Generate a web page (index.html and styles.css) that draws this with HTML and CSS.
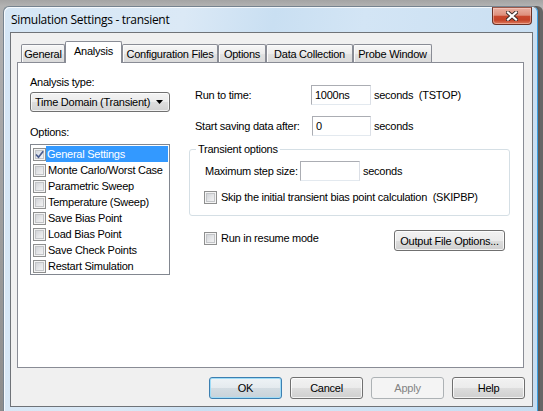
FILE: index.html
```html
<!DOCTYPE html>
<html>
<head>
<meta charset="utf-8">
<title>Simulation Settings - transient</title>
<link rel="stylesheet" href="styles.css">
</head>
<body>
<div class="window">
  <div class="titlebar">
    <span class="title">Simulation Settings - transient</span>
    <span class="close">
      <svg width="12" height="10" viewBox="0 0 12 10"><path d="M2 1.5L10 8.5M10 1.5L2 8.5" stroke="#3a2a28" stroke-width="4" stroke-linecap="square"/><path d="M2 1.5L10 8.5M10 1.5L2 8.5" stroke="#ffffff" stroke-width="2.2" stroke-linecap="square"/></svg>
    </span>
  </div>
  <div class="client">
    <div class="tabs">
      <div class="tab t-general">General</div>
      <div class="tab sel t-analysis">Analysis</div>
      <div class="tab t-config">Configuration Files</div>
      <div class="tab t-options">Options</div>
      <div class="tab t-data">Data Collection</div>
      <div class="tab t-probe">Probe Window</div>
    </div>
    <div class="panel">
      <div class="leftcol">
        <div class="lbl lbl-type">Analysis type:</div>
        <div class="combo"><span class="combo-text">Time Domain (Transient)</span><svg class="arrow" width="7" height="4" viewBox="0 0 7 4"><path d="M0 0H7L3.5 4Z" fill="#000"/></svg></div>
        <div class="lbl lbl-opts">Options:</div>
        <div class="list">
          <div class="item"><span class="cb checked"><svg width="11" height="11" viewBox="0 0 11 11"><path d="M2 5.5L4.5 8.2L9.2 2.2" fill="none" stroke="#4b5d8f" stroke-width="1.7"/></svg></span><span class="itext hl">General Settings</span></div>
          <div class="item"><span class="cb"></span><span class="itext">Monte Carlo/Worst Case</span></div>
          <div class="item"><span class="cb"></span><span class="itext">Parametric Sweep</span></div>
          <div class="item"><span class="cb"></span><span class="itext">Temperature (Sweep)</span></div>
          <div class="item"><span class="cb"></span><span class="itext">Save Bias Point</span></div>
          <div class="item"><span class="cb"></span><span class="itext">Load Bias Point</span></div>
          <div class="item"><span class="cb"></span><span class="itext">Save Check Points</span></div>
          <div class="item"><span class="cb"></span><span class="itext">Restart Simulation</span></div>
        </div>
      </div>
      <div class="rightcol">
        <div class="row row1"><span class="rl w1">Run to time:</span><span class="edit e1">1000ns</span><span class="unit">seconds&nbsp; (TSTOP)</span></div>
        <div class="row row2"><span class="rl w2">Start saving data after:</span><span class="edit e2">0</span><span class="unit">seconds</span></div>
        <fieldset class="group">
          <legend>Transient options</legend>
          <div class="row row3"><span class="rl w3">Maximum step size:</span><span class="edit e3"></span><span class="unit">seconds</span></div>
          <div class="chk row4"><span class="cb"></span><span class="ctext">Skip the initial transient bias point calculation&nbsp; (SKIPBP)</span></div>
        </fieldset>
        <div class="row5">
          <div class="chk resume"><span class="cb"></span><span class="ctext">Run in resume mode</span></div>
          <div class="btn outbtn">Output File Options...</div>
        </div>
      </div>
    </div>
    <div class="buttons">
      <div class="btn dlg default">OK</div>
      <div class="btn dlg">Cancel</div>
      <div class="btn dlg disabled">Apply</div>
      <div class="btn dlg">Help</div>
    </div>
  </div>
</div>
</body>
</html>
```
FILE: styles.css
```css
html, body {
  margin: 0;
  padding: 0;
}
body {
  width: 543px;
  height: 411px;
  overflow: hidden;
  background: linear-gradient(to bottom, #a4a4a4 0, #b2b2b2 6px, #8c8c8c 100%);
  font-family: "Liberation Sans", Arial, sans-serif;
  font-size: 11px;
  letter-spacing: -0.25px;
  color: #000;
}
.window {
  margin: 6px 0 0 3px;
  width: 535px;
  height: 405px;
  box-sizing: border-box;
  border: 1px solid #76838f;
  border-right-color: #3c9fe2;
  border-bottom: none;
  border-radius: 6px 6px 0 0;
  background: linear-gradient(100deg, #d5e6f5 0%, #dbe9f6 30%, #c9dff2 45%, #d3e5f5 60%, #c6ddf1 100%);
  box-shadow: inset 1px 1px 0 rgba(255,255,255,0.75), 2px 0 0 #5c5c5c, 5px 0 0 #666;
  padding: 0 4px 0 6px;
}
.titlebar {
  height: 25px;
  display: flex;
  align-items: flex-start;
}
.title {
  font-family: "Open Sans", "Noto Sans", sans-serif;
  font-size: 12px;
  letter-spacing: -0.3px;
  line-height: 16px;
  margin-top: 5px;
  padding-left: 1px;
  color: #000;
}
.close {
  margin-left: auto;
  margin-right: 1px;
  width: 40px;
  height: 18px;
  box-sizing: border-box;
  border: 1px solid #6b3226;
  border-top-color: #9a5a4c;
  border-radius: 0 0 4px 4px;
  background: linear-gradient(to bottom, #eab0a2 0%, #de8f7c 45%, #c9482e 52%, #c44328 75%, #dd7a5c 100%);
  box-shadow: inset 0 0 0 1px rgba(255,220,210,0.45);
  display: flex;
  align-items: center;
  justify-content: center;
}
.close svg { display: block; }
.client {
  width: 523px;
  height: 375px;
  box-sizing: border-box;
  border: 1px solid #6f7378;
  background: #f0f0f0;
  padding: 8px 8px 0 6px;
}
.tabs {
  display: flex;
  align-items: flex-end;
  height: 21px;
  margin-left: 4px;
}
.tab {
  height: 18px;
  box-sizing: border-box;
  border: 1px solid #898c95;
  border-bottom: none;
  border-radius: 2px 2px 0 0;
  background: linear-gradient(to bottom, #f7f7f7 0%, #ececec 50%, #e2e2e2 51%, #dadada 100%);
  box-shadow: inset 1px 1px 0 #fbfbfb;
  display: flex;
  align-items: center;
  justify-content: center;
  white-space: nowrap;
}
.tab.sel {
  height: 22px;
  margin-bottom: -1px;
  background: #ffffff;
  box-shadow: none;
  position: relative;
  z-index: 1;
  padding-bottom: 3px;
}
.t-general { width: 44px; }
.t-analysis { width: 57px; }
.t-config { width: 96px; }
.t-options { width: 48px; }
.t-data { width: 87px; }
.t-probe { width: 79px; }
.panel {
  height: 306px;
  box-sizing: border-box;
  border: 1px solid #898c95;
  background: #ffffff;
  display: flex;
  align-items: flex-start;
}
.leftcol {
  margin-left: 12px;
  width: 140px;
}
.lbl {
  line-height: 13px;
}
.lbl-type { margin-top: 13px; }
.combo {
  margin-top: 3px;
  height: 20px;
  box-sizing: border-box;
  border: 1px solid #707070;
  border-radius: 3px;
  background: linear-gradient(to bottom, #f3f3f3 0%, #ebebeb 50%, #dedede 51%, #d2d2d2 100%);
  box-shadow: inset 0 0 0 1px rgba(255,255,255,0.7);
  display: flex;
  align-items: center;
  padding: 0 6px 0 4px;
}
.combo-text { flex: 1; white-space: nowrap; }
.arrow { display: block; }
.lbl-opts { margin-top: 14px; }
.list {
  margin-top: 5px;
  height: 131px;
  box-sizing: border-box;
  border: 1px solid #828790;
  background: #fff;
  padding-top: 1px;
}
.item {
  height: 16px;
  display: flex;
  align-items: flex-start;
}
.item .cb {
  margin: 2px 0 0 2px;
}
.itext {
  height: 16px;
  line-height: 16px;
  padding-left: 2px;
  white-space: nowrap;
}
.itext.hl {
  flex: 1;
  margin-right: 1px;
  background: #3399ff;
  color: #fff;
  padding-left: 1px;
}
.cb {
  width: 13px;
  height: 13px;
  flex: none;
  box-sizing: border-box;
  border: 1px solid #8e8f8f;
  background: linear-gradient(135deg, #c8cbd0 0%, #e6e7e9 55%, #f8f8f8 100%);
  box-shadow: inset 0 0 0 1px #f4f4f4, inset 0 0 0 2px #c3c5c8;
  display: flex;
  align-items: center;
  justify-content: center;
}
.cb.checked {
  background: linear-gradient(135deg, #c9d0db 0%, #e8ebf0 55%, #f8f9fa 100%);
}
.cb svg { display: block; }
.rightcol {
  margin-left: 19px;
  width: 321px;
}
.row {
  display: flex;
  align-items: center;
  height: 20px;
  white-space: nowrap;
}
.row1 { margin-top: 22px; padding-left: 6px; }
.row2 { margin-top: 11px; padding-left: 6px; }
.w1 { width: 116px; }
.w2 { width: 117px; }
.w3 { width: 95px; }
.edit {
  height: 20px;
  box-sizing: border-box;
  border: 1px solid #abadb3;
  border-right-color: #dbdfe6;
  border-bottom-color: #e3e9ef;
  background: #fff;
  padding-left: 3px;
  line-height: 18px;
}
.e1 { width: 60px; }
.e2 { width: 59px; }
.e3 { width: 60px; }
.unit { margin-left: 3px; }
.group {
  margin: 7px 0 0 0;
  padding: 0 0 11px 0;
  min-width: 0;
  width: 321px;
  box-sizing: border-box;
  border: 1px solid #d5dfe5;
  border-radius: 3px;
}
.group legend {
  margin-left: 6px;
  padding: 0 2px;
  line-height: 13px;
}
.row3 { margin-top: 5px; padding-left: 15px; }
.chk {
  display: flex;
  align-items: center;
  white-space: nowrap;
}
.ctext { margin-left: 4px; line-height: 13px; }
.row4 { margin-top: 10px; padding-left: 14px; }
.row5 {
  margin-top: 14px;
  display: flex;
  align-items: flex-start;
}
.resume { margin-top: 2px; padding-left: 15px; }
.btn {
  box-sizing: border-box;
  border: 1px solid #707070;
  border-radius: 3px;
  background: linear-gradient(to bottom, #f2f2f2 0%, #ebebeb 50%, #dddddd 51%, #cfcfcf 100%);
  box-shadow: inset 0 0 0 1px rgba(255,255,255,0.75);
  display: flex;
  align-items: center;
  justify-content: center;
  white-space: nowrap;
}
.outbtn {
  margin-left: auto;
  margin-right: 5px;
  width: 111px;
  height: 21px;
}
.buttons {
  margin-top: 9px;
  margin-right: -1px;
  display: flex;
  justify-content: flex-end;
  gap: 8px;
}
.dlg {
  width: 73px;
  height: 22px;
}
.dlg.default {
  border-color: #3c7fb1;
  background: linear-gradient(to bottom, #eef3f6 0%, #e4eaee 50%, #d3dce2 51%, #c8d2d9 100%);
  box-shadow: inset 0 0 0 1px #9fdcf7;
}
.dlg.disabled {
  border-color: #adb2b5;
  background: #f4f4f4;
  box-shadow: none;
  color: #838383;
}
```
